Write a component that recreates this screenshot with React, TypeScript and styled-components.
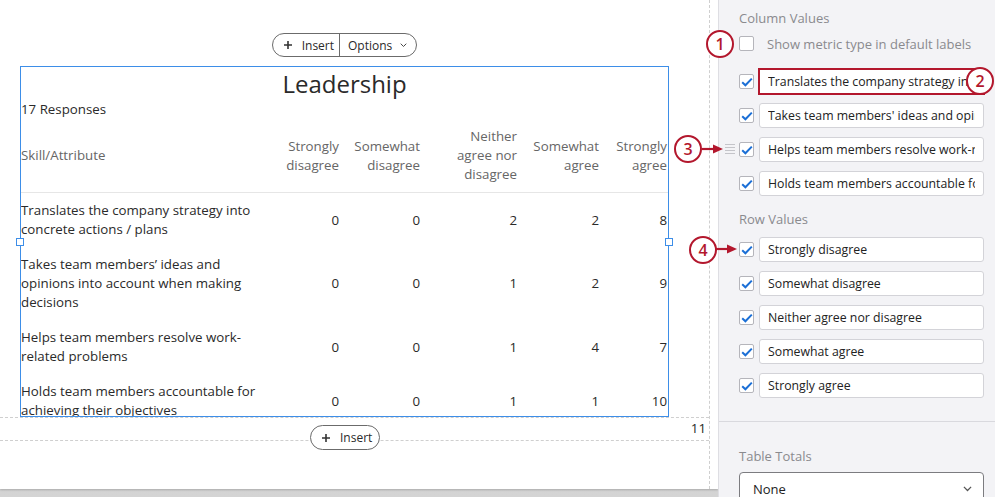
import styled, { createGlobalStyle } from 'styled-components';

const GlobalStyle = createGlobalStyle`
  html, body {
    margin: 0;
    padding: 0;
  }
  body {
    font-family: 'Open Sans', 'Noto Sans', sans-serif;
    background: #f3f3f6;
    overflow: hidden;
  }
  * {
    box-sizing: border-box;
  }
`;

const RED = '#b3172d';
const COLS = '250px 68px 81px 97px 82px 68px';

const Screen = styled.div`
  position: relative;
  display: flex;
  width: 995px;
  height: 497px;
  overflow: hidden;
`;

const Stage = styled.div`
  flex: none;
  width: 718px;
  background: linear-gradient(to bottom, #c2c2c2, #d4d4d4);
`;

const Canvas = styled.div`
  height: 489px;
  background: #fff;
  box-shadow: 0 1px 2px rgba(0, 0, 0, 0.2);
`;

const Page = styled.div`
  display: flex;
  flex-direction: column;
  width: 710px;
  height: 100%;
  padding-top: 33px;
  border-right: 1px dashed #cfcfcf;
`;

const ToolbarRow = styled.div`
  display: flex;
  justify-content: center;
  width: 649px;
  height: 24px;
  margin: 0 0 9px 20px;
`;

const Pill = styled.div`
  display: flex;
  height: 24px;
  border: 1px solid #6b6b6b;
  border-radius: 12px;
  background: #fff;
  overflow: hidden;
`;

const PillButton = styled.div<{ $pad?: string }>`
  display: flex;
  align-items: center;
  gap: 10px;
  padding: ${(p) => p.$pad || '0 5px 0 10px'};
  font-size: 12px;
  color: #2a2a2a;
  & + & {
    border-left: 1px solid #6b6b6b;
    gap: 8px;
  }
`;

const Widget = styled.div`
  position: relative;
  flex: none;
  width: 649px;
  height: 351px;
  margin-left: 20px;
  border: 1px solid #3d8ee8;
`;

const Clip = styled.div`
  height: 100%;
  overflow: hidden;
`;

const Handle = styled.span<{ $side: 'left' | 'right' }>`
  position: absolute;
  top: 171px;
  ${(p) => p.$side}: -5px;
  width: 8px;
  height: 8px;
  background: #fff;
  border: 1px solid #3d8ee8;
`;

const Title = styled.h1`
  margin: 0;
  padding-top: 1px;
  font-size: 24px;
  font-weight: 400;
  line-height: 32px;
  text-align: center;
  color: #2a2a2a;
`;

const Responses = styled.div`
  font-size: 13.3px;
  line-height: 19px;
  color: #2a2a2a;
`;

const Row = styled.div<{ $head?: boolean }>`
  display: grid;
  grid-template-columns: ${COLS};
  align-items: center;
  padding: 8px 0;
  font-size: 13.3px;
  line-height: 19px;
  color: ${(p) => (p.$head ? '#666' : '#2a2a2a')};
  border-bottom: ${(p) => (p.$head ? '1px solid #e6e6e6' : 'none')};
`;

const LabelCell = styled.div`
  padding-right: 2px;
`;

const NumCell = styled.div<{ $max?: number }>`
  justify-self: end;
  max-width: ${(p) => (p.$max ? `${p.$max}px` : 'none')};
  padding-left: 12px;
  text-align: right;
`;

const Footer = styled.div`
  position: relative;
  height: 24px;
  border-top: 1px dashed #cfcfcf;
  border-bottom: 1px dashed #cfcfcf;
  padding-right: 3px;
  text-align: right;
  font-size: 13.3px;
  line-height: 21px;
  color: #2a2a2a;
`;

const FloatingPill = styled(Pill)`
  position: absolute;
  left: 310px;
  top: 7px;
  height: 25px;
  border-radius: 13px;
`;

const Sidebar = styled.aside`
  flex: 1;
  padding: 9px 11px 0 20px;
  background: #f3f3f6;
  border-left: 1px solid #dedee3;
`;

const SectionLabel = styled.div<{ $gap?: number }>`
  margin-top: ${(p) => p.$gap || 0}px;
  font-size: 13px;
  line-height: 19px;
  color: #8a8a8e;
`;

const MetricRow = styled.label`
  display: flex;
  align-items: center;
  gap: 13px;
  height: 19px;
  margin-top: 6px;
  font-size: 13px;
  color: #8a8a8e;
`;

const ValueList = styled.div<{ $gap: number }>`
  display: flex;
  flex-direction: column;
  gap: 9px;
  margin-top: ${(p) => p.$gap}px;
`;

const ValueRow = styled.div`
  position: relative;
  display: flex;
  align-items: center;
  gap: 5px;
`;

const Box = styled.span`
  flex: none;
  display: grid;
  place-items: center;
  width: 15px;
  height: 15px;
  background: #fff;
  border: 1px solid #b5b5bb;
  border-radius: 2px;
`;

const ValueInput = styled.input<{ $highlight?: boolean }>`
  flex: 1;
  min-width: 0;
  height: 25px;
  padding: 0 8px 0 8px;
  font-family: 'Open Sans', 'Noto Sans', sans-serif;
  font-size: 12.3px;
  color: #222;
  background: #fff;
  border: 1px solid ${(p) => (p.$highlight ? RED : '#d3d3d8')};
  border-radius: ${(p) => (p.$highlight ? '0' : '3px')};
  box-shadow: ${(p) => (p.$highlight ? `0 0 0 1px ${RED}` : 'none')};
  outline: none;
`;

const Grip = styled.span`
  position: absolute;
  left: -14px;
  top: 7px;
  width: 10px;
  height: 10px;
  background: repeating-linear-gradient(to bottom, #c4c4c9 0 1px, transparent 1px 3px);
`;

const Divider = styled.div`
  height: 1px;
  margin: 23px -11px 0 -20px;
  background: #d9d9de;
`;

const Select = styled.div`
  display: flex;
  align-items: center;
  justify-content: space-between;
  height: 34px;
  margin-top: 6px;
  padding: 0 11px 0 13px;
  font-size: 13px;
  color: #222;
  background: #fff;
  border: 1px solid #7c7c80;
  border-radius: 4px;
`;

const Marker = styled.div<{ $x: number; $y: number }>`
  position: absolute;
  left: ${(p) => p.$x}px;
  top: ${(p) => p.$y}px;
  display: grid;
  place-items: center;
  width: 28px;
  height: 28px;
  background: #fff;
  border: 2.5px solid ${RED};
  border-radius: 50%;
  font-size: 16px;
  font-weight: 600;
  line-height: 1;
  color: ${RED};
`;

const Arrow = styled.svg<{ $x: number; $y: number }>`
  position: absolute;
  left: ${(p) => p.$x}px;
  top: ${(p) => p.$y}px;
`;

const PlusIcon = () => (
  <svg width="8" height="8" viewBox="0 0 8 8">
    <path d="M4 0v8M0 4h8" stroke="#333" strokeWidth="1.6" />
  </svg>
);

const Chevron = ({ size = 7, color = '#444' }: { size?: number; color?: string }) => (
  <svg width={size} height={size * 0.6} viewBox="0 0 10 6">
    <path d="M1 1l4 4 4-4" fill="none" stroke={color} strokeWidth="1.4" />
  </svg>
);

const Check = () => (
  <svg width="12" height="10" viewBox="0 0 12 10">
    <path d="M1.2 5.2l3.2 3.1L10.8 1.6" fill="none" stroke="#1b6fd6" strokeWidth="2" />
  </svg>
);

const ArrowHead = ({ x, y }: { x: number; y: number }) => (
  <Arrow $x={x} $y={y} width="22" height="12" viewBox="0 0 22 12">
    <path d="M0 6h14" stroke={RED} strokeWidth="2.2" />
    <path d="M11 1.5L21 6l-10 4.5z" fill={RED} />
  </Arrow>
);

const columns = [
  { label: 'Strongly disagree' },
  { label: 'Somewhat disagree' },
  { label: 'Neither agree nor disagree', max: 78 },
  { label: 'Somewhat agree' },
  { label: 'Strongly agree' },
];

const rows = [
  { label: 'Translates the company strategy into concrete actions / plans', values: [0, 0, 2, 2, 8] },
  { label: 'Takes team members’ ideas and opinions into account when making decisions', values: [0, 0, 1, 2, 9] },
  { label: 'Helps team members resolve work-related problems', values: [0, 0, 1, 4, 7] },
  { label: 'Holds team members accountable for achieving their objectives', values: [0, 0, 1, 1, 10] },
];

const columnValues = [
  'Translates the company strategy into concrete actions / plans',
  "Takes team members' ideas and opinions into account when making decisions",
  'Helps team members resolve work-related problems',
  'Holds team members accountable for achieving their objectives',
];

const rowValues = ['Strongly disagree', 'Somewhat disagree', 'Neither agree nor disagree', 'Somewhat agree', 'Strongly agree'];

export default function App() {
  return (
    <>
      <GlobalStyle />
      <Screen>
        <Stage>
          <Canvas>
            <Page>
              <ToolbarRow>
                <Pill>
                  <PillButton $pad="0 5px 0 11px">
                    <PlusIcon />
                    Insert
                  </PillButton>
                  <PillButton $pad="0 9px 0 8px">
                    Options
                    <Chevron />
                  </PillButton>
                </Pill>
              </ToolbarRow>
              <Widget>
                <Clip>
                  <Title>Leadership</Title>
                  <Responses>17 Responses</Responses>
                  <Row $head>
                    <LabelCell>Skill/Attribute</LabelCell>
                    {columns.map((c) => (
                      <NumCell key={c.label} $max={c.max}>
                        {c.label}
                      </NumCell>
                    ))}
                  </Row>
                  {rows.map((r) => (
                    <Row key={r.label}>
                      <LabelCell>{r.label}</LabelCell>
                      {r.values.map((v, i) => (
                        <NumCell key={i}>{v}</NumCell>
                      ))}
                    </Row>
                  ))}
                </Clip>
                <Handle $side="left" />
                <Handle $side="right" />
              </Widget>
              <Footer>
                11
                <FloatingPill>
                  <PillButton $pad="0 7px 0 11px">
                    <PlusIcon />
                    Insert
                  </PillButton>
                </FloatingPill>
              </Footer>
            </Page>
          </Canvas>
        </Stage>
        <Sidebar>
          <SectionLabel>Column Values</SectionLabel>
          <MetricRow>
            <Box />
            Show metric type in default labels
          </MetricRow>
          <ValueList $gap={16}>
            {columnValues.map((v, i) => (
              <ValueRow key={v}>
                {i === 2 && <Grip />}
                <Box>
                  <Check />
                </Box>
                <ValueInput readOnly defaultValue={v} $highlight={i === 0} />
              </ValueRow>
            ))}
          </ValueList>
          <SectionLabel $gap={14}>Row Values</SectionLabel>
          <ValueList $gap={8}>
            {rowValues.map((v) => (
              <ValueRow key={v}>
                <Box>
                  <Check />
                </Box>
                <ValueInput readOnly defaultValue={v} />
              </ValueRow>
            ))}
          </ValueList>
          <Divider />
          <SectionLabel $gap={25}>Table Totals</SectionLabel>
          <Select>
            None
            <Chevron size={9} color="#555" />
          </Select>
        </Sidebar>
        <Marker $x={706} $y={30}>1</Marker>
        <Marker $x={966} $y={67}>2</Marker>
        <Marker $x={674} $y={135}>3</Marker>
        <ArrowHead x={702} y={143} />
        <Marker $x={689} $y={236}>4</Marker>
        <ArrowHead x={716} y={243} />
      </Screen>
    </>
  );
}
